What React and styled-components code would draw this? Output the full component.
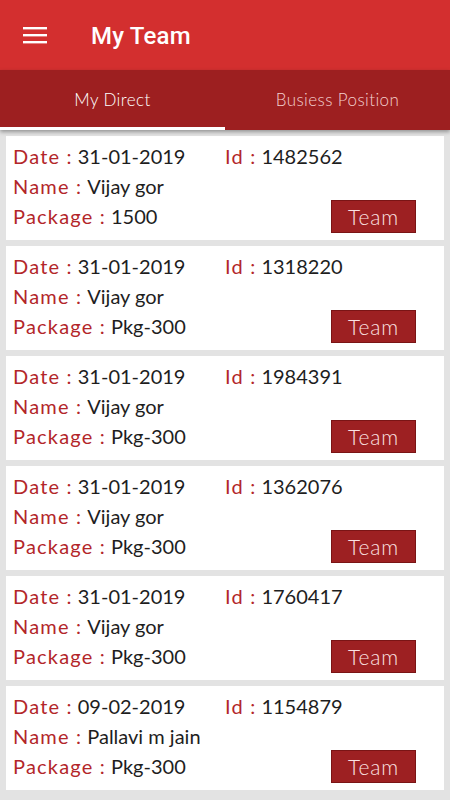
import React from "react";
import styled, { createGlobalStyle } from "styled-components";

const GlobalStyle = createGlobalStyle`
  html, body {
    margin: 0;
    padding: 0;
    background: #e3e3e3;
  }
  * { box-sizing: border-box; }
`;

const Page = styled.div`
  width: 450px;
  min-height: 800px;
  background: #e3e3e3;
  font-family: "Lato", "Open Sans", sans-serif;
`;

const AppBar = styled.header`
  height: 70px;
  background: #d32f2f;
  display: flex;
  align-items: center;
  padding-left: 23px;
  gap: 44px;
`;

const Title = styled.h1`
  margin: 0;
  font-family: Roboto, "Noto Sans", sans-serif;
  font-weight: 500;
  font-size: 24px;
  color: #ffffff;
  letter-spacing: 0.2px;
  padding-top: 2px;
`;

const Tabs = styled.nav`
  height: 60px;
  background: #9d1f20;
  display: flex;
  box-shadow: 0 2px 4px rgba(0, 0, 0, 0.35);
  position: relative;
  z-index: 1;
`;

const Tab = styled.div`
  flex: 1;
  display: flex;
  align-items: center;
  justify-content: center;
  font-size: 17px;
  font-weight: 300;
  letter-spacing: 0.4px;
  color: ${p => (p.active ? "#ffffff" : "#f3cfcf")};
  border-bottom: 3px solid ${p => (p.active ? "#ffffff" : "transparent")};
  padding-top: 2px;
`;

const List = styled.main`
  display: flex;
  flex-direction: column;
  gap: 6px;
  padding: 6px 6px 10px;
`;

const Card = styled.section`
  background: #ffffff;
  height: 104px;
  padding: 5px 7px 0;
  display: flex;
  flex-direction: column;
`;

const Row = styled.div`
  display: flex;
  align-items: center;
  height: 30px;
  font-size: 20px;
  line-height: 30px;
`;

const Field = styled.span`
  width: ${p => p.width || "auto"};
  color: #1e1e1e;
  white-space: nowrap;
`;

const Label = styled.span`
  color: #b3262a;
  letter-spacing: 1.2px;
  margin-right: 5px;
`;

const TeamButton = styled.button`
  margin-left: auto;
  margin-right: 21px;
  width: 85px;
  height: 33px;
  background: #9d2022;
  border: 1px solid #7a1415;
  color: #fbe3e3;
  font-family: "Lato", "Open Sans", sans-serif;
  font-weight: 300;
  letter-spacing: 0.8px;
  font-size: 21px;
  padding: 0;
  cursor: pointer;
`;

const Menu = () => (
  <svg width="24" height="18" viewBox="0 0 24 18">
    <rect x="0" y="1" width="24" height="2.4" fill="#fff" />
    <rect x="0" y="8" width="24" height="2.4" fill="#fff" />
    <rect x="0" y="15" width="24" height="2.4" fill="#fff" />
  </svg>
);

const members = [
  { date: "31-01-2019", id: "1482562", name: "Vijay gor", pkg: "1500" },
  { date: "31-01-2019", id: "1318220", name: "Vijay gor", pkg: "Pkg-300" },
  { date: "31-01-2019", id: "1984391", name: "Vijay gor", pkg: "Pkg-300" },
  { date: "31-01-2019", id: "1362076", name: "Vijay gor", pkg: "Pkg-300" },
  { date: "31-01-2019", id: "1760417", name: "Vijay gor", pkg: "Pkg-300" },
  { date: "09-02-2019", id: "1154879", name: "Pallavi m jain", pkg: "Pkg-300" }
];

export default function App() {
  return (
    <Page>
      <GlobalStyle />
      <AppBar>
        <Menu />
        <Title>My Team</Title>
      </AppBar>
      <Tabs>
        <Tab active>My Direct</Tab>
        <Tab>Busiess Position</Tab>
      </Tabs>
      <List>
        {members.map((m, i) => (
          <Card key={i}>
            <Row>
              <Field width="212px">
                <Label>Date :</Label>
                {m.date}
              </Field>
              <Field>
                <Label>Id :</Label>
                {m.id}
              </Field>
            </Row>
            <Row>
              <Field>
                <Label>Name :</Label>
                {m.name}
              </Field>
            </Row>
            <Row>
              <Field>
                <Label>Package :</Label>
                {m.pkg}
              </Field>
              <TeamButton>Team</TeamButton>
            </Row>
          </Card>
        ))}
      </List>
    </Page>
  );
}
